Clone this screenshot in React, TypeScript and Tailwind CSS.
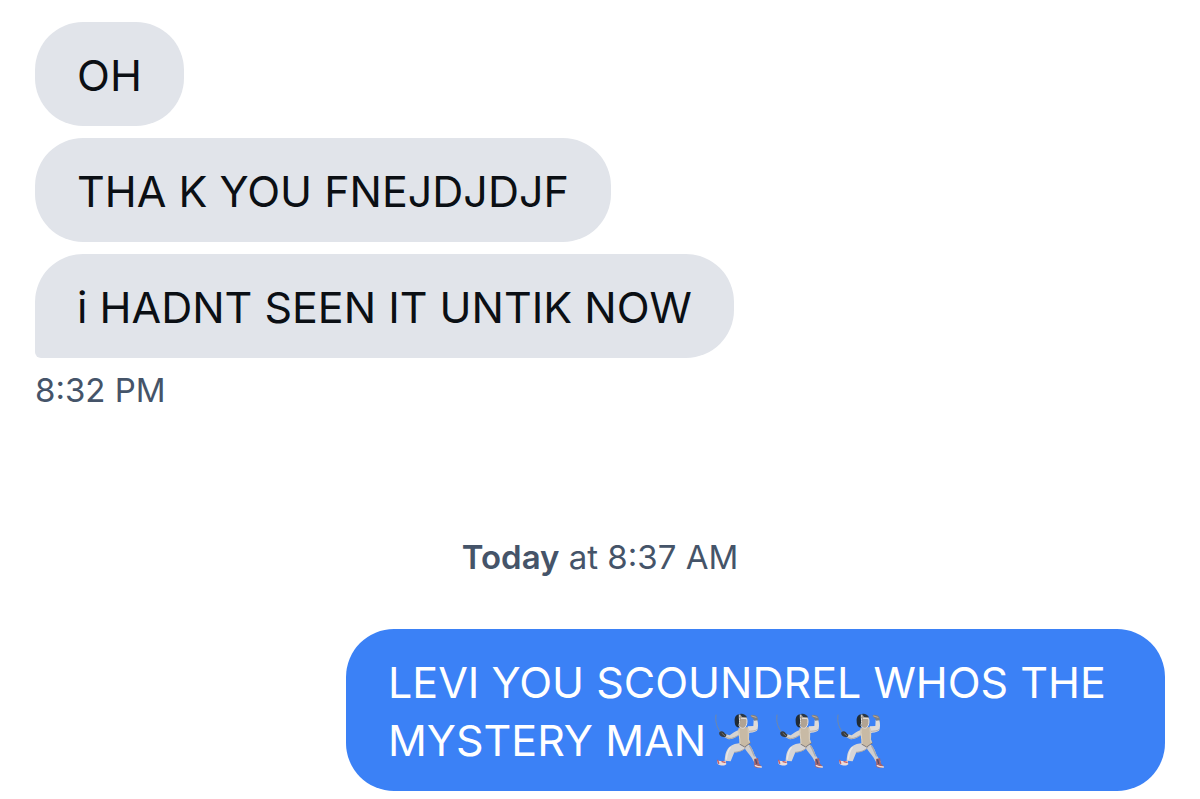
import clsx from "clsx";

const received = [
  { id: 1, text: "OH" },
  { id: 2, text: "THA K YOU FNEJDJDJF" },
  { id: 3, text: "i HADNT SEEN IT UNTIK NOW" },
];

function Fencer() {
  return (
    <svg
      role="img"
      aria-label="person fencing"
      viewBox="30 30 183 174"
      className="inline-block h-[58px] w-[61px] align-top"
      fill="none"
      strokeLinecap="round"
      strokeLinejoin="round"
    >
      {/* Foil */}
      <path d="M48 42 C45 62 50 80 64 96" stroke="#7188a6" strokeWidth="3" />

      {/* Back leg */}
      <path d="M132 128 L145 130 C158 140 160 154 164 162 L177 184 L165 188 L155 170 C146 158 138 150 132 138 Z" fill="#cfcecf" />
      <path d="M149 135 C156 145 158 156 163 165" stroke="#aaa9ad" strokeWidth="4" />
      <path d="M162 174 L174 171 L177 188 C181 192 185 194 184 198 C178 203 170 201 163 197 Z" fill="#a5656f" />
      <path d="M166 194 C172 198 179 198 184 198" stroke="#f4dfd8" strokeWidth="4" />
      <path d="M167 177 L170 187" stroke="#554d64" strokeWidth="4" />

      {/* Front leg */}
      <path d="M122 126 L143 132 C136 148 119 153 103 154 L92 181 L74 179 C75 161 78 148 88 138 C98 130 110 127 122 126 Z" fill="#d6d5d7" />
      <path d="M103 154 C115 153 128 150 138 139" stroke="#aaa5a4" strokeWidth="3" />
      <path d="M91 140 C82 150 80 164 79 174" stroke="#eae8e7" strokeWidth="4" />
      <path d="M51 177 C58 182 67 180 77 179 L79 190 C73 196 61 194 53 189 Z" fill="#eadbd9" />
      <path d="M53 178 L56 187 M66 182 L75 184" stroke="#c45b62" strokeWidth="4" />

      {/* Sword arm */}
      <path d="M116 87 L118 101 C108 108 96 117 84 114 L72 108 L76 99 L89 103 C98 96 106 90 116 87 Z" fill="#d6d3d1" />
      <path d="M80 110 C93 117 106 108 115 103" stroke="#aaa7a6" strokeWidth="3" />
      <path d="M58 94 C64 88 72 91 75 98 L80 101 L76 109 L66 107 C60 105 56 100 58 94 Z" fill="#373b3f" />
      <path d="M66 97 L75 105" stroke="#77736c" strokeWidth="3" />

      {/* Raised arm */}
      <path d="M143 76 L160 75 L161 57 L172 57 C175 68 175 81 171 89 C163 95 152 93 143 98 Z" fill="#dedbd8" />
      <path d="M145 91 C155 90 165 91 171 86" stroke="#b5aead" strokeWidth="3" />
      <path d="M151 44 C156 39 166 42 172 48 L174 58 L162 59 C163 52 155 51 151 44 Z" fill="#777f87" />
      <path d="M155 45 L168 49" stroke="#c2a995" strokeWidth="3" />

      {/* Jacket */}
      <path d="M116 80 L143 78 C149 88 148 102 147 115 L151 126 L134 139 L119 130 C121 114 112 99 116 80 Z" fill="#c8baa5" />
      <path d="M117 86 C115 99 121 111 120 128" stroke="#dcd5c9" strokeWidth="3" />
      <path d="M144 83 C147 98 142 113 147 123" stroke="#d8cfc1" strokeWidth="3" />
      <path d="M120 130 L134 138 L151 126" stroke="#817b7c" strokeWidth="3" />

      {/* Mask */}
      <path d="M121 41 C132 39 141 46 141 56 C143 70 137 82 126 83 C116 80 115 53 121 41 Z" fill="#b1a393" />
      <path d="M120 40 C109 39 103 48 104 61 C104 72 109 81 117 79 C122 68 120 52 120 40 Z" fill="#202b35" />
      <path d="M120 39 C128 37 137 41 141 49 L126 48 Z" fill="#293746" />
      <path d="M118 42 C117 54 121 62 117 73 C120 81 129 85 135 79 C141 73 142 61 140 53 L124 52" stroke="#e6e1dc" strokeWidth="3" />
    </svg>
  );
}

export default function App() {
  return (
    <main className="min-h-screen bg-white px-[35px] pt-[22px] pb-2 font-['Inter',sans-serif]">
      <section className="flex flex-col items-start gap-3">
        {received.map((message, i) => (
          <p
            key={message.id}
            className={clsx(
              "rounded-[48px] bg-[#e1e4ea] px-[42px] pt-6 pb-[22px] text-[43px] leading-[58px] text-[#0b0f14]",
              i === received.length - 1 && "rounded-bl-[6px]"
            )}
          >
            {message.text}
          </p>
        ))}
      </section>
      <time className="mt-3 block text-[33px] leading-[40px] text-[#455469]">8:32 PM</time>

      <div className="mt-[127px] text-center text-[33px] leading-[40px] text-[#455469]">
        <span className="font-semibold">Today</span> at 8:37 AM
      </div>

      <section className="mt-[52px] flex justify-end">
        <p className="w-full max-w-[819px] rounded-[48px] bg-[#3b81f6] px-[42px] pt-6 pb-[22px] text-[43px] leading-[58px] text-white">
          LEVI YOU SCOUNDREL WHOS THE MYSTERY MAN
          <span className="ml-1 whitespace-nowrap">
            <Fencer />
            <Fencer />
            <Fencer />
          </span>
        </p>
      </section>
    </main>
  );
}
